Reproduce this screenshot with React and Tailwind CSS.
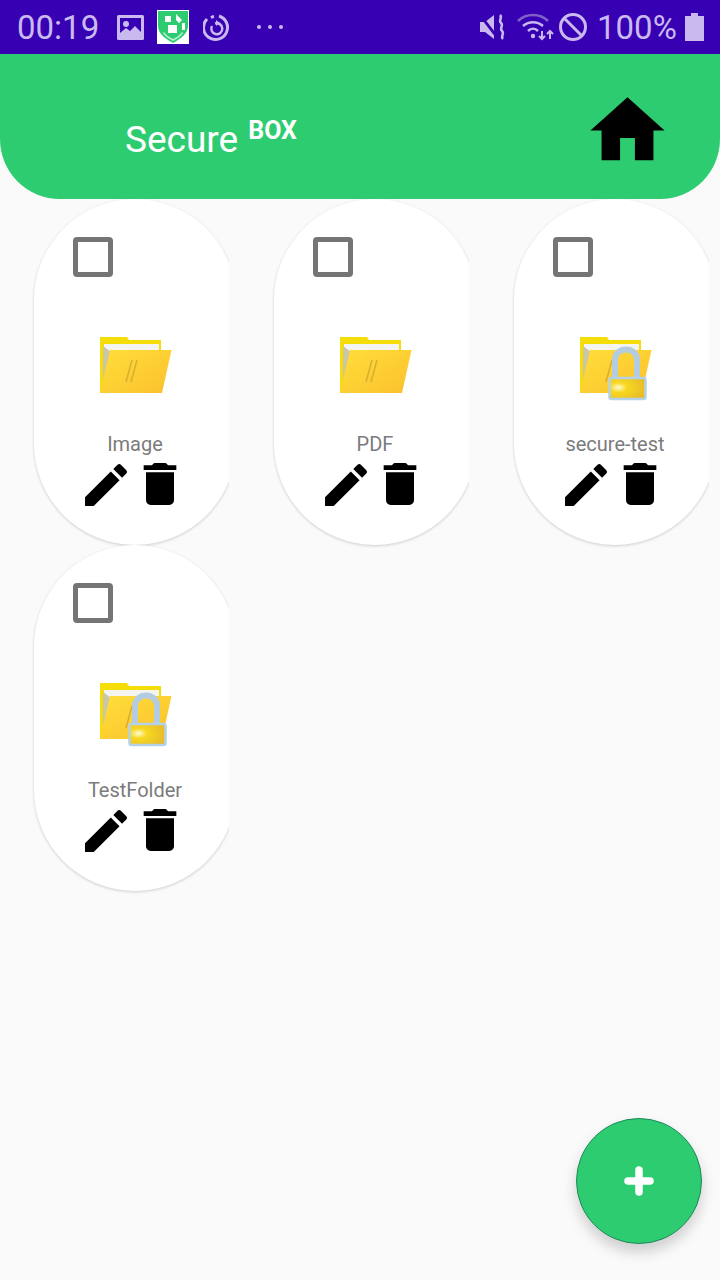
const folders = [
  { name: 'Image', locked: false },
  { name: 'PDF', locked: false },
  { name: 'secure-test', locked: true },
  { name: 'TestFolder', locked: true },
];

const FolderIcon = ({ locked, id }) => (
  <svg width="72" height="68" viewBox="0 0 72 68">
    <defs>
      <linearGradient id={`front-${id}`} x1="0" y1="0" x2="1" y2="1">
        <stop offset="0" stopColor="#ffdf3a" />
        <stop offset="1" stopColor="#fbc02d" />
      </linearGradient>
      <radialGradient id={`body-${id}`} cx="0.25" cy="0.45" r="0.8">
        <stop offset="0" stopColor="#fffbd0" />
        <stop offset="0.3" stopColor="#f7d820" />
        <stop offset="1" stopColor="#e6b92a" />
      </radialGradient>
    </defs>
    <path d="M0 3h27l2 3h32v12H5v41H0z" fill="#f5dd0a" />
    <path d="M4 10h55v8H12l-8 30z" fill="#f4f4f0" />
    <path d="M3 12v46h2L11 18z" fill="#c9c7a8" />
    <path d="M10 16h61.5L62 59H0z" fill={`url(#front-${id})`} />
    <path d="M32 26l-6 22M37 26l-6 22" stroke="#c9a63a" strokeWidth="1.5" fill="none" opacity="0.8" />
    {locked && (
      <g>
        <path d="M35 46V26c0-14 22-14 22 0v20" fill="none" stroke="#b4cce0" strokeWidth="6" />
        <rect x="29.5" y="44" width="36" height="21" rx="2" fill={`url(#body-${id})`} stroke="#b3d2ea" strokeWidth="2.5" />
      </g>
    )}
  </svg>
);

const FolderCard = ({ folder, id }) => (
  <div className="w-[229px] overflow-x-clip pl-[34px]">
    <div className="flex h-[346px] w-[202px] flex-col rounded-[101px] bg-white shadow-[0_1px_3px_rgba(0,0,0,0.18)]">
      <div className="ml-[39px] mt-[38px] h-[40px] w-[40px] rounded-[4px] border-[5px] border-[#757575]" />
      <div className="ml-[66px] mt-[57px] h-[68px]">
        <FolderIcon locked={folder.locked} id={id} />
      </div>
      <div className="mt-[30px] text-center text-[20px] leading-[24px] text-[#7b7b7b]">{folder.name}</div>
      <div className="ml-[44px] mt-[1px] flex">
        <svg width="56" height="56" viewBox="0 0 24 24" fill="#000">
          <path d="M3 17.25V21h3.75L17.81 9.94l-3.75-3.75L3 17.25zM20.71 7.04c.39-.39.39-1.02 0-1.41l-2.34-2.34c-.39-.39-1.02-.39-1.41 0l-1.83 1.83 3.75 3.75 1.83-1.83z" />
        </svg>
        <svg className="ml-[-2px] mt-[-1px]" width="56" height="56" viewBox="0 0 24 24" fill="#000">
          <path d="M6 19c0 1.1.9 2 2 2h8c1.1 0 2-.9 2-2V7H6v12zM19 4h-3.5l-1-1h-5l-1 1H5v2h14V4z" />
        </svg>
      </div>
    </div>
  </div>
);

const StatusBar = () => (
  <div className="flex h-[54px] items-center bg-[#3700b3] pl-[17px] text-[33px] text-[#c9b9ee]">
    <span className="w-[82px] leading-none">00:19</span>
    <svg className="ml-[18px]" width="27" height="25" viewBox="0 0 27 25">
      <rect width="27" height="25" rx="1.5" fill="#c9b9ee" />
      <rect x="3" y="3" width="21" height="19" fill="#3700b3" />
      <circle cx="9" cy="9" r="3" fill="#c9b9ee" />
      <path d="M3 22v-4l6-5 4 3 5-5 6 6v5z" fill="#c9b9ee" />
    </svg>
    <svg className="ml-[13px]" width="32" height="34" viewBox="0 0 32 34">
      <rect width="32" height="34" fill="#fff" />
      <path d="M1 1h30v15c0 8-8 13-15 17C9 29 1 24 1 16z" fill="#2ecc71" />
      <path d="M8 6h6v6H8zM11 15h9v8h-9zM19 4l6 6-3 3-3-3zM25 13h3v7h-3z" fill="#fff" />
      <path d="M6 23c2 3 6 6 10 8 4-2 8-5 10-8l-1-1c-2 3-5 5-9 7-4-2-7-4-9-7z" fill="#fff" opacity="0.7" />
    </svg>
    <svg className="ml-[14px]" width="27" height="27" viewBox="0 0 27 27" fill="none" stroke="#c9b9ee" strokeWidth="3">
      <path d="M16 2a12 12 0 1 1-12 3" />
      <path d="M11 2.4a12 12 0 0 0-3 1.2" />
      <path d="M9 12a5.5 5.5 0 1 0 3-2.5" strokeWidth="2.5" />
      <path d="M13 6v6l4-3z" fill="#c9b9ee" stroke="none" />
    </svg>
    <div className="ml-[27px] flex gap-[7px]">
      <span className="h-[4px] w-[4px] rounded-full bg-[#c9b9ee]" />
      <span className="h-[4px] w-[4px] rounded-full bg-[#c9b9ee]" />
      <span className="h-[4px] w-[4px] rounded-full bg-[#c9b9ee]" />
    </div>
    <svg className="ml-[197px]" width="27" height="28" viewBox="0 0 27 28" fill="#c9b9ee">
      <path d="M0 9h5l9-7v24l-9-7H0z" />
      <path d="M1 1l17 22-2 2L-1 3z" fill="#3700b3" />
      <path d="M20 2c3 3-2 5 1 8s-2 5 1 8-2 5 1 8" fill="none" stroke="#c9b9ee" strokeWidth="2.5" />
    </svg>
    <svg className="ml-[10px]" width="37" height="28" viewBox="0 0 37 28" fill="none" stroke="#c9b9ee" strokeWidth="2.5">
      <path d="M1 8c8-8 22-8 30 0" stroke="#7f5fc8" />
      <path d="M6 13c6-5 14-5 20 0" />
      <path d="M11 18c3-3 7-3 10 0" />
      <circle cx="16" cy="23" r="2.2" fill="#c9b9ee" stroke="none" />
      <path d="M25 18v8M22 23l3 3 3-3" strokeWidth="2" />
      <path d="M33 26v-8M30 21l3-3 3 3" strokeWidth="2" />
    </svg>
    <svg className="ml-[4px]" width="30" height="30" viewBox="0 0 30 30" fill="none" stroke="#c9b9ee" strokeWidth="3">
      <circle cx="15" cy="15" r="12.5" />
      <path d="M6 6l18 18" />
    </svg>
    <span className="ml-[9px] w-[80px] leading-none">100%</span>
    <svg className="ml-[8px]" width="19" height="28" viewBox="0 0 19 28" fill="#c9b9ee">
      <path d="M6 0h7v3h6v25H0V3h6z" />
    </svg>
  </div>
);

const App = () => {
  return (
    <div className="relative h-[1280px] w-[720px] overflow-hidden bg-[#fafafa] font-['Roboto',sans-serif]">
      <StatusBar />

      <header className="relative z-10 flex h-[145px] items-center rounded-b-[60px] bg-[#2ecc71] pl-[125px] pr-[48px] pt-[25px]">
        <span className="text-[37px] leading-none text-white">Secure</span>
        <span className="mb-[18px] ml-[10px] text-[25px] font-bold leading-none text-white">BOX</span>
        <svg className="ml-auto mt-[-17px]" width="89" height="89" viewBox="0 0 24 24" fill="#000">
          <path d="M10 20v-6h4v6h5v-8h3L12 3 2 12h3v8z" />
        </svg>
      </header>

      <div className="grid grid-cols-[repeat(3,229px)] gap-x-[11px]">
        {folders.map((folder, i) => (
          <FolderCard key={folder.name} folder={folder} id={i} />
        ))}
      </div>

      <button className="absolute left-[576px] top-[1118px] flex h-[126px] w-[126px] items-center justify-center rounded-full border border-[#1b8a5a] bg-[#2ecc71] shadow-[0_8px_14px_rgba(0,0,0,0.18)]">
        <svg width="30" height="30" viewBox="0 0 30 30" fill="none" stroke="#fff" strokeWidth="7.5" strokeLinecap="round">
          <path d="M15 4v22M4 15h22" />
        </svg>
      </button>
    </div>
  );
};

export default App;
